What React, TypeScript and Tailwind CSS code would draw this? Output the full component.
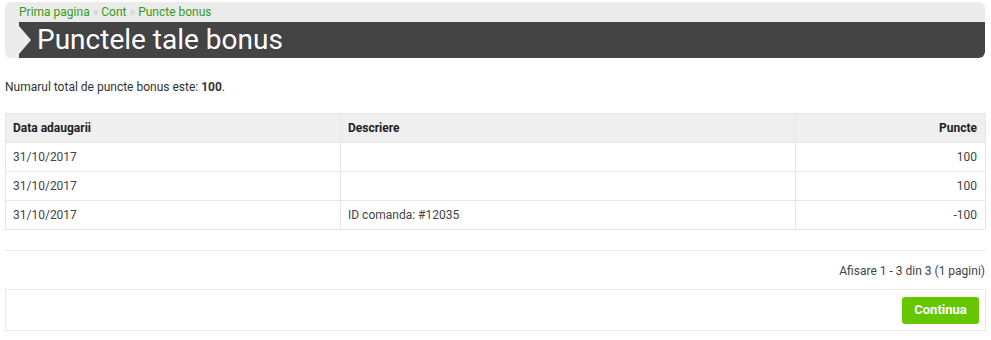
const rows = [
  { date: '31/10/2017', desc: '', pts: '100' },
  { date: '31/10/2017', desc: '', pts: '100' },
  { date: '31/10/2017', desc: 'ID comanda: #12035', pts: '-100' },
];

export default function App() {
  return (
    <div className="min-h-[340px] bg-white px-[5px] pt-[2px] font-['Roboto',sans-serif] text-[12px] text-[#444]">
      {/* heading block: breadcrumb + dark title bar */}
      <div className="mr-[1px] rounded-[6px] bg-[#ebebeb] overflow-hidden">
        <div className="flex h-[20px] items-center pl-[14px] text-[12px] text-[#3a9a1a]">
          <span>Prima pagina</span>
          <span className="mx-[3px] text-[#c8c8c8]">»</span>
          <span>Cont</span>
          <span className="mx-[3px] text-[#c8c8c8]">»</span>
          <span>Puncte bonus</span>
        </div>
        <div className="relative ml-[14px] flex h-[36px] items-center rounded-br-[6px] bg-[#444444] pl-[18px]">
          <span className="absolute left-0 top-[4px] h-0 w-0 border-y-[14px] border-l-[12px] border-y-transparent border-l-[#ebebeb]" />
          <h1 className="text-[28px] leading-none font-normal text-white">Punctele tale bonus</h1>
        </div>
      </div>

      <p className="mt-[20px] text-[12px] text-[#333]">
        Numarul total de puncte bonus este: <b>100</b>.
      </p>

      <table className="mt-[17px] w-full border-collapse border border-[#e6e6e6] text-[12px]">
        <thead>
          <tr className="h-[29px] bg-[#efefef] text-[#222]">
            <th className="w-[335px] border border-[#e6e6e6] px-[7px] text-left font-bold">Data adaugarii</th>
            <th className="w-[455px] border border-[#e6e6e6] px-[7px] text-left font-bold">Descriere</th>
            <th className="border border-[#e6e6e6] px-[8px] text-right font-bold">Puncte</th>
          </tr>
        </thead>
        <tbody>
          {rows.map((r, i) => (
            <tr key={i} className="h-[29px] text-[#444]">
              <td className="border border-[#e6e6e6] px-[7px]">{r.date}</td>
              <td className="border border-[#e6e6e6] px-[7px]">{r.desc}</td>
              <td className="border border-[#e6e6e6] px-[8px] text-right">{r.pts}</td>
            </tr>
          ))}
        </tbody>
      </table>

      <div className="mt-[20px] border-t border-[#e8e8e8]" />
      <div className="mt-[11px] pr-[1px] text-right text-[12px] text-[#444]">Afisare 1 - 3 din 3 (1 pagini)</div>

      <div className="mt-[9px] flex h-[42px] items-center justify-end border border-[#e8e8e8] pr-[6px]">
        <button className="h-[27px] w-[77px] rounded-[3px] bg-[#66c700] text-[13px] font-bold text-white">
          Continua
        </button>
      </div>
    </div>
  );
}
